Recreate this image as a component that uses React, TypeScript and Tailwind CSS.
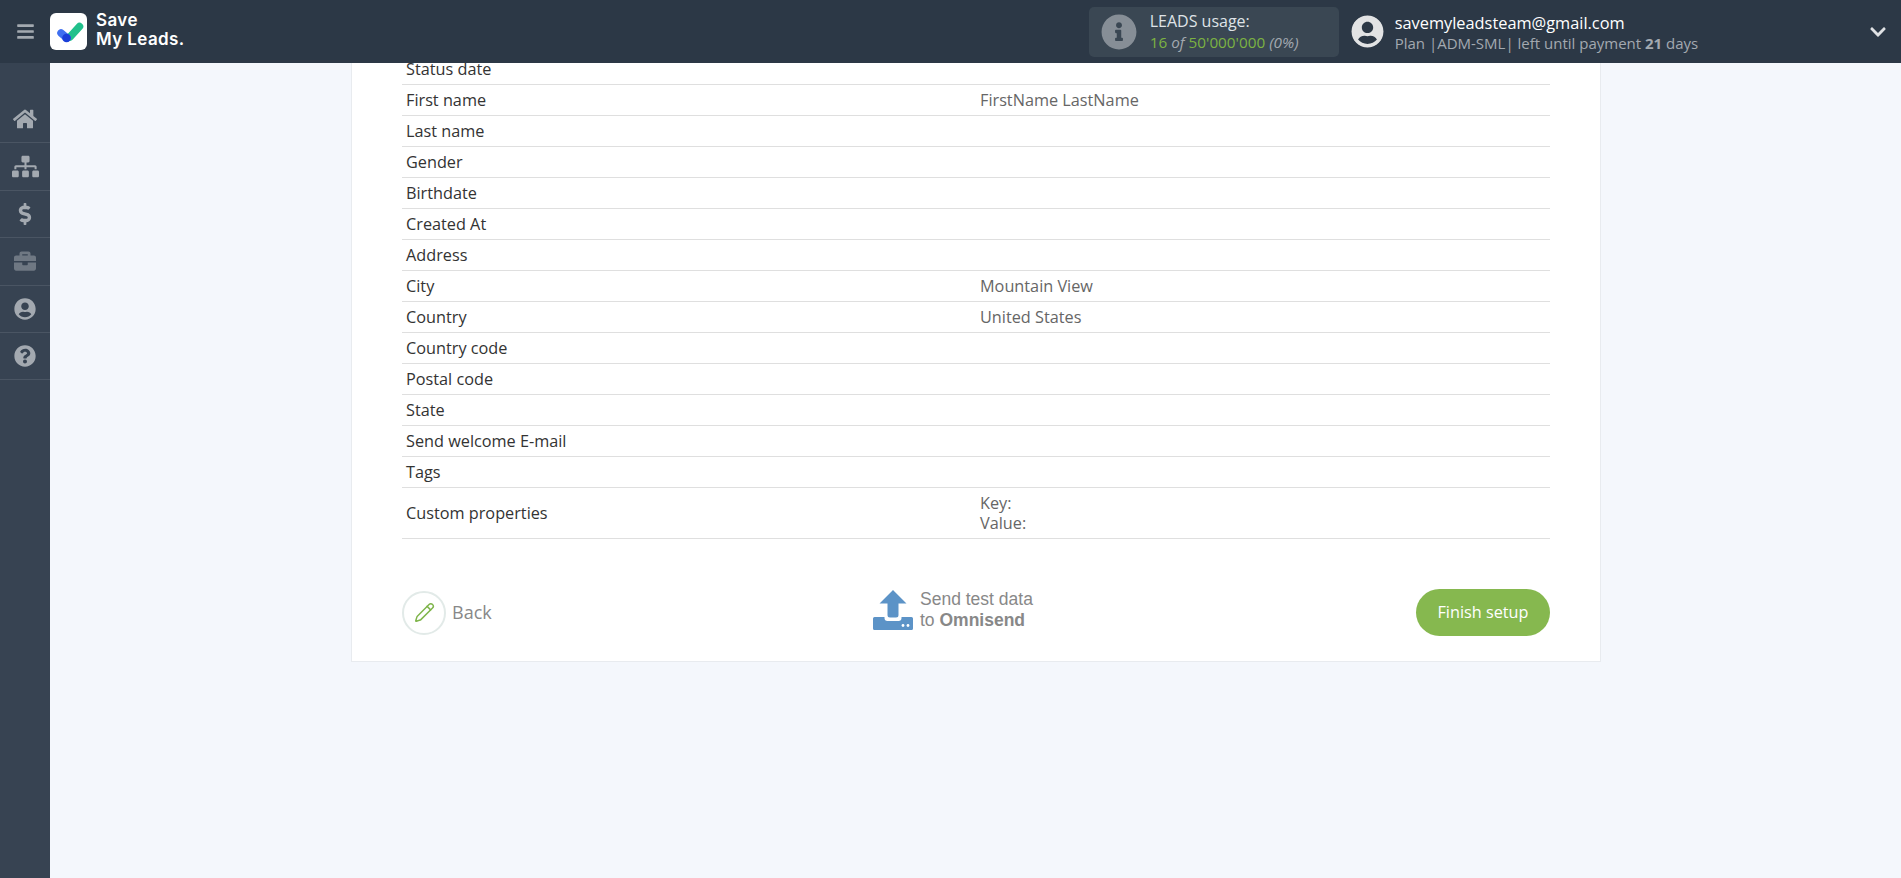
import React from "react";
import { FaBars, FaBriefcase, FaChevronDown, FaDollarSign, FaHome, FaInfoCircle, FaQuestionCircle, FaSitemap, FaUserCircle } from "react-icons/fa";
import { Pencil } from "lucide-react";

const rows: [string, string][] = [
  ["Status date", ""],
  ["First name", "FirstName LastName"],
  ["Last name", ""],
  ["Gender", ""],
  ["Birthdate", ""],
  ["Created At", ""],
  ["Address", ""],
  ["City", "Mountain View"],
  ["Country", "United States"],
  ["Country code", ""],
  ["Postal code", ""],
  ["State", ""],
  ["Send welcome E-mail", ""],
  ["Tags", ""],
];

const side = [
  { I: FaHome, s: 24, c: "text-[#a3a9b0]" },
  { I: FaSitemap, s: 27, c: "text-[#a3a9b0]" },
  { I: FaDollarSign, s: 22, c: "text-[#a3a9b0]" },
  { I: FaBriefcase, s: 22, c: "text-[#6f7883]" },
  { I: FaUserCircle, s: 22, c: "text-[#a3a9b0]" },
  { I: FaQuestionCircle, s: 22, c: "text-[#a3a9b0]" },
];

function Logo() {
  return (
    <div className="w-[37px] h-[37px] bg-white rounded-[6px] flex items-center justify-center">
      <svg viewBox="0 0 37 37" className="w-[37px] h-[37px]">
        <path d="M20 24 L29.500 13.500" stroke="#21c08b" strokeWidth="7.500" strokeLinecap="round" fill="none" />
        <path d="M11 20 L17 25" stroke="#3f6ff0" strokeWidth="7.500" strokeLinecap="round" fill="none" />
        <circle cx="16.500" cy="25" r="4.300" fill="#1b3fd8" />
      </svg>
    </div>
  );
}

function UploadIcon() {
  return (
    <svg viewBox="0 0 40 40" className="w-[40px] h-[40px]">
      <path d="M20 0 L33.500 13.500 H25.500 V25 Q25.500 27.500 23 27.500 H17 Q14.500 27.500 14.500 25 V13.500 H6.500 Z" fill="#5c93c7" />
      <path d="M1.500 27 H11.500 V28 Q11.500 31 14.500 31 H25.500 Q28.500 31 28.500 28 V27 H38.500 Q40 27 40 28.500 V38.500 Q40 40 38.500 40 H1.500 Q0 40 0 38.500 V28.500 Q0 27 1.500 27 Z" fill="#5c93c7" />
      <circle cx="30" cy="35.500" r="1.400" fill="#fff" />
      <circle cx="35" cy="35.500" r="1.400" fill="#fff" />
    </svg>
  );
}

export default function App() {
  return (
    <div className="h-screen flex flex-col overflow-hidden bg-[#f4f7fc] font-['Open_Sans',sans-serif]">
      <header className="h-[63px] shrink-0 bg-[#2c3846] flex items-center relative z-10">
        <div className="w-[50px] flex justify-center">
          <FaBars size={19} className="text-[#a3a9b0]" />
        </div>
        <Logo />
        <div className="ml-[9px] -mt-[3px] text-white font-['Inter',sans-serif] font-semibold text-[17px] leading-[19px] tracking-[0.4px]">
          <div>Save</div>
          <div>My Leads.</div>
        </div>
        <div className="ml-[904px] w-[250px] h-[50px] bg-[#3a4753] rounded-[5px] flex items-center px-[12px]">
          <FaInfoCircle size={36} className="text-[#868e96]" />
          <div className="ml-[13px]">
            <div className="text-[16px] leading-[20px] text-[#dfe3e7]">LEADS usage:</div>
            <div className="text-[15.300px] leading-[20px] mt-[1px] text-[#a3a9b0] whitespace-nowrap">
              <span className="text-[#7cb342]">16</span> <i>of</i> <span className="text-[#7cb342]">50'000'000</span> <i>(0%)</i>
            </div>
          </div>
        </div>
        <FaUserCircle size={33} className="ml-[12px] text-[#e2e3e4] bg-[#2c3846] rounded-full" />
        <div className="ml-[11px] mt-[2px] w-[475px]">
          <div className="text-[16.350px] leading-[22px] text-white">savemyleadsteam@gmail.com</div>
          <div className="text-[15px] leading-[19px] text-[#a3a9b0] whitespace-nowrap">
            Plan |ADM-SML| left until payment <b>21</b> days
          </div>
        </div>
        <FaChevronDown size={18} className="text-[#dfe1e4] ml-[-1px] mt-[1px]" />
      </header>
      <div className="flex-1 flex min-h-0">
        <aside className="w-[50px] shrink-0 bg-[#374352] pt-[33px]">
          {side.map(({ I, s, c }, i) => (
            <div key={i} className="h-[47.400px] flex items-center justify-center border-b border-[#4a5563]">
              <I size={s} className={c} />
            </div>
          ))}
        </aside>
        <main className="flex-1 min-w-0 overflow-hidden">
          <div className="w-[1250px] ml-[301px] -mt-[10px] bg-white border border-[#e8ebef] px-[50px] pb-[25px]">
            <div className="text-[16.250px] text-[#333]">
              {rows.map(([a, b]) => (
                <div key={a} className="h-[31px] flex items-center border-b border-[#dfdfdf] px-[4px]">
                  <div className="w-[574px] shrink-0">{a}</div>
                  <div className="text-[#666]">{b}</div>
                </div>
              ))}
              <div className="h-[51px] flex items-center border-b border-[#dfdfdf] px-[4px]">
                <div className="w-[574px] shrink-0">Custom properties</div>
                <div className="text-[#666] leading-[20px]">
                  <div>Key:</div>
                  <div>Value:</div>
                </div>
              </div>
            </div>
            <div className="mt-[50px] h-[47px] relative flex items-center justify-between">
              <div className="flex items-center">
                <div className="w-[44px] h-[44px] rounded-full border-2 border-[#e2eae8] flex items-center justify-center">
                  <Pencil size={21} strokeWidth={1.7} className="text-[#7fb54b]" />
                </div>
                <span className="ml-[6px] text-[18px] text-[#888]">Back</span>
              </div>
              <div className="flex items-center absolute left-[471px] top-[0px]">
                <UploadIcon />
                <div className="ml-[7px] font-['Liberation_Sans',sans-serif] text-[#888] text-[17.500px] leading-[21px]">
                  <div>Send test data</div>
                  <div>
                    to <b>Omnisend</b>
                  </div>
                </div>
              </div>
              <div className="w-[134px] h-[47px] rounded-full bg-[#86b84f] text-white text-[16.250px] flex items-center justify-center">
                Finish setup
              </div>
            </div>
          </div>
        </main>
      </div>
    </div>
  );
}
